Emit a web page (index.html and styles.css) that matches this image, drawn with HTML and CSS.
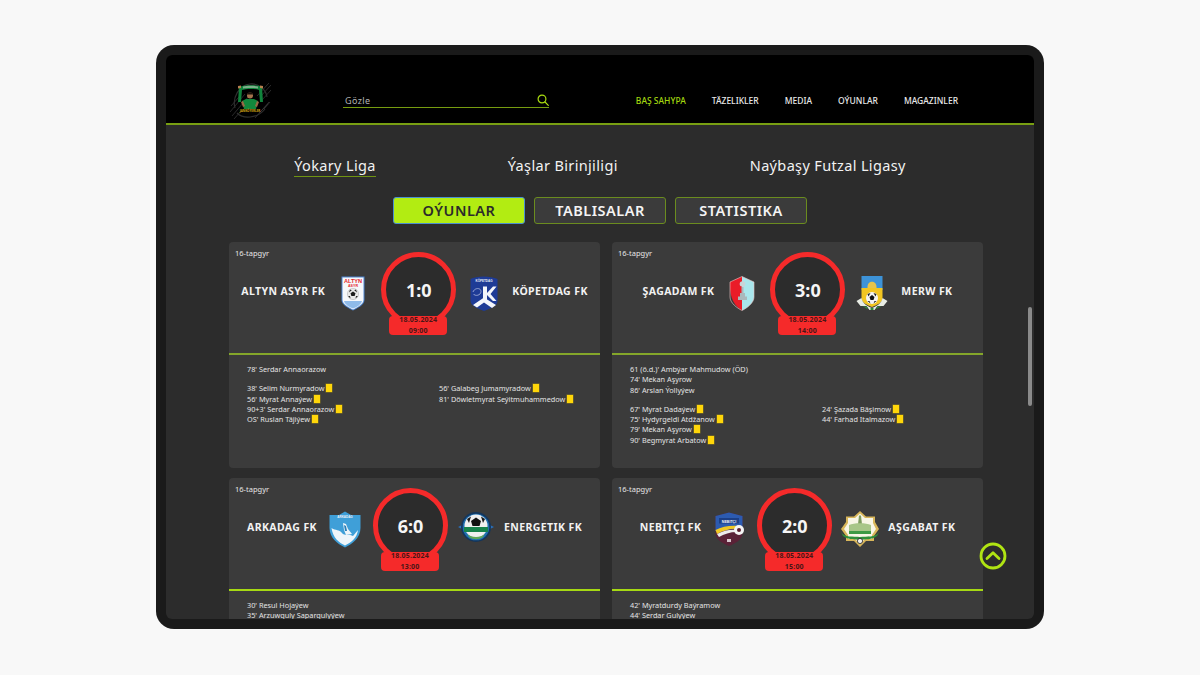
FILE: index.html
```html
<!DOCTYPE html>
<html lang="tk">
<head>
<meta charset="utf-8">
<title>Ýokary Liga</title>
<link rel="stylesheet" href="styles.css">
</head>
<body>
<div class="device">
<div class="screen">
  <header class="topbar">
    <svg class="brand" viewBox="0 0 42 38" aria-hidden="true">
      <g stroke="#3c3c3c" stroke-width=".7"><path d="M1 30L16 12M3 34L20 14M5 37L12 29M28 14L40 1M31 15L42 3M33 18L42 8M30 31L39 22M26 36L40 20M2 24L10 15M35 27L41 20"/></g>
      <path d="M6 26C3 16 10 3 21 2C30 1 37 8 38 15M8 31C14 37 28 37 36 27" fill="none" stroke="#2e2e2e" stroke-width="1.2"/>
      <path d="M10 5C16 2.500 27 2.500 33 5L34 20H31L30 8C26 6.500 17 6.500 13 8L12 20H9Z" fill="#10843c"/>
      <path d="M14 4.500C18 3.500 25 3.500 29 4.500V6.500C25 5.700 18 5.700 14 6.500Z" fill="#7cb08a"/>
      <path d="M9 4L12 3.500V6L9 6.500ZM31 3.500L34 4V6.500L31 6Z" fill="#b5804f"/>
      <path d="M13 19L17 17H25L29 19L27 27H15Z" fill="#12883c"/>
      <path d="M12 20L14 19L16 24L14 25ZM30 20L28 19L26 24L28 25Z" fill="#9a6a45"/>
      <circle cx="21" cy="13.500" r="3" fill="#a5744c"/>
      <path d="M18 12.500C18 9.500 24 9.500 24 12.500Z" fill="#1d120c"/>
      <text x="21" y="29.500" class="brand-text">JANKÖÝERLER</text>
    </svg>
    <form class="search">
      <span class="search-text">Gözle</span>
      <svg class="search-icon" viewBox="0 0 12 12" aria-hidden="true"><circle cx="5" cy="5" r="3.9"/><path d="M8 8L11.3 11.3"/></svg>
    </form>
    <nav class="nav">
      <a class="nav-link is-current">BAŞ SAHYPA</a>
      <a class="nav-link">TÄZELIKLER</a>
      <a class="nav-link">MEDIA</a>
      <a class="nav-link">OÝUNLAR</a>
      <a class="nav-link">MAGAZINLER</a>
    </nav>
  </header>

  <main class="content">
    <div class="leagues">
      <a class="league is-current">Ýokary Liga</a>
      <a class="league">Ýaşlar Birinjiligi</a>
      <a class="league">Naýbaşy Futzal Ligasy</a>
    </div>
    <div class="tabs">
      <button class="tab is-active">OÝUNLAR</button>
      <button class="tab">TABLISALAR</button>
      <button class="tab">STATISTIKA</button>
    </div>

    <div class="matches">
      <article class="match">
        <div class="match-head line-dim">
          <div class="round">16-tapgyr</div>
          <div class="teams">
            <span class="team">ALTYN ASYR FK</span>
            <svg class="logo" viewBox="0 0 30 40" aria-hidden="true">
              <path d="M3.500 6.500H26.500V30C26.500 35 19 38.500 15 40.500C11 38.500 3.500 35 3.500 30Z" fill="#4f86d2"/>
              <path d="M4.500 7.500H25.500V30C25.500 34 19 37.500 15 39.500C11 37.500 4.500 34 4.500 30Z" fill="#f6f8fb"/>
              <text x="15" y="12.500" class="crest crest-red">ALTYN</text>
              <text x="15" y="16.500" class="crest-sm crest-red">ASYR</text>
              <circle cx="15" cy="24" r="5.600" fill="#e9e9e9" stroke="#999" stroke-width=".4"/>
              <path d="M15 21.500L17.500 23.300L16.600 26H13.400L12.500 23.300Z" fill="#1c1c1c"/>
              <path d="M12 19.500L13.800 20.200L11 22.400ZM18 19.500L16.200 20.200L19 22.400ZM10 26L12 26L12.500 28.500ZM20 26L18 26L17.500 28.500Z" fill="#2a2a2a"/>
              <path d="M6 31H24C23 35 18 37.500 15 38.500C12 37.500 7 35 6 31Z" fill="#8fbbea"/>
            </svg>
            <div class="score-wrap">
              <div class="score">1:0</div>
              <div class="when"><span>18.05.2024</span><span>09:00</span></div>
            </div>
            <svg class="logo" viewBox="0 0 30 40" aria-hidden="true">
              <path d="M1.500 9C7 5.500 22 5.500 28.500 9V31C28.500 36 20 39 15 41C10 39 1.500 36 1.500 31Z" fill="#1e3b96"/>
              <text x="15" y="12" class="crest-xs crest-white">KÖPETDAG</text>
              <path d="M14 16.500H18V23L24 16.500H27.500L21.500 24L27.500 31H24L18 25V31H14Z" fill="#f4f6fb"/>
              <path d="M4 22C5.500 17.500 12 17.500 12 21.500C12 25.500 6 26.500 4.500 24" fill="none" stroke="#aeb9df" stroke-width=".8"/>
              <path d="M4 35L15 27.500L27 35L23 38L15 32.500L8 37.500Z" fill="#f4f6fb"/>
            </svg>
            <span class="team">KÖPETDAG FK</span>
          </div>
        </div>
        <div class="match-body">
          <ul class="events"><li>78' Serdar Annaorazow</li></ul>
          <div class="event-cols">
            <ul class="events">
              <li>38' Selim Nurmyradow <i class="yellow"></i></li>
              <li>56' Myrat Annaýew <i class="yellow"></i></li>
              <li>90+3' Serdar Annaorazow <i class="yellow"></i></li>
              <li>OS' Ruslan Täjiýew <i class="yellow"></i></li>
            </ul>
            <ul class="events">
              <li>56' Galabeg Jumamyradow <i class="yellow"></i></li>
              <li>81' Döwletmyrat Seýitmuhammedow <i class="yellow"></i></li>
            </ul>
          </div>
        </div>
      </article>

      <article class="match">
        <div class="match-head line-dim">
          <div class="round">16-tapgyr</div>
          <div class="teams">
            <span class="team">ŞAGADAM FK</span>
            <svg class="logo" viewBox="0 0 30 40" aria-hidden="true">
              <path d="M15 6.500L27 12V27C27 33 20 38 15 40.500Z" fill="#a9e6ec"/>
              <path d="M15 6.500L3 12C2.500 22 4 34 15 40.500Z" fill="#ea1c28"/>
              <path d="M15 6.500L27 12V27C27 33 20 38 15 40.500C10 38 3 33 3 27V12Z" fill="none" stroke="#f0c8c8" stroke-width=".6"/>
              <circle cx="15.500" cy="14" r="2.800" fill="#c9d4d8"/>
              <path d="M14.500 17h2v6h-2zM11 26.500h9v3.500h-9zM13 23h5v3.500h-5z" fill="#aab8bc"/>
            </svg>
            <div class="score-wrap">
              <div class="score">3:0</div>
              <div class="when"><span>18.05.2024</span><span>14:00</span></div>
            </div>
            <svg class="logo" viewBox="0 0 30 40" aria-hidden="true">
              <g transform="translate(-1.500 0)">
                <rect x="5" y="6" width="21" height="14" fill="#3d93d8"/>
                <path d="M11 17C11 10 20 10 20 17V19H11Z" fill="#e7c44a"/>
                <path d="M5 18H26V28C26 33 20 35 15.500 37C11 35 5 33 5 28Z" fill="#f2c521"/>
                <path d="M0 31L5 28C6 33 10 36 15.500 38C21 36 25 33 26 28L31 31L27 36L21 36L18 40H13L10 36L4 36Z" fill="#e8ece4"/>
                <path d="M6 36L11 37L11 39ZM14 38H17V40H14ZM20 37L25 36L20 39Z" fill="#2e8b3c"/>
                <circle cx="15.500" cy="28" r="6" fill="#f4f4f4"/>
                <path d="M15.500 25L18 27L17 30H14L13 27Z" fill="#111"/>
                <path d="M11 24L14 23L12 26.500ZM20 24L17 23L19 26.500ZM11 31L13 31L14 33.500ZM20 31L18 31L17 33.500Z" fill="#222"/>
              </g>
            </svg>
            <span class="team">MERW FK</span>
          </div>
        </div>
        <div class="match-body">
          <ul class="events">
            <li>61 (ö.d.)' Ambýar Mahmudow (ÖD)</li>
            <li>74' Mekan Aşyrow</li>
            <li>86' Arslan Ýollyýew</li>
          </ul>
          <div class="event-cols">
            <ul class="events">
              <li>67' Myrat Dadaýew <i class="yellow"></i></li>
              <li>75' Hydyrgeldi Atdžanow <i class="yellow"></i></li>
              <li>79' Mekan Aşyrow <i class="yellow"></i></li>
              <li>90' Begmyrat Arbatow <i class="yellow"></i></li>
            </ul>
            <ul class="events">
              <li>24' Şazada Bäşimow <i class="yellow"></i></li>
              <li>44' Farhad Italmazow <i class="yellow"></i></li>
            </ul>
          </div>
        </div>
      </article>

      <article class="match">
        <div class="match-head">
          <div class="round">16-tapgyr</div>
          <div class="teams">
            <span class="team">ARKADAG FK</span>
            <svg class="logo" viewBox="0 0 30 40" aria-hidden="true">
              <path d="M15 5.500L21 9H30.500V22C30.500 32 22 38 15 41.500C8 38 -.500 32 -.500 22V9H9Z" fill="#3f9fd8"/>
              <path d="M1.500 22C6 25 9 23 12 27C14 30 20 28 23 30L28 24C27 32 21 36.500 15 39.500C9 36.500 3 32 1.500 22Z" fill="#eef5fa"/>
              <path d="M13 17L16 18L18 23L22 28L16 29L14 24Z" fill="#eef5fa"/>
              <path d="M14 19L16 20L17 25L15 25Z" fill="#2d7fb6"/>
              <text x="15" y="12" class="crest-xs crest-white">ARKADAG</text>
            </svg>
            <div class="score-wrap">
              <div class="score">6:0</div>
              <div class="when"><span>18.05.2024</span><span>13:00</span></div>
            </div>
            <svg class="logo" viewBox="0 0 30 40" aria-hidden="true">
              <path d="M-3 21L4 17.500V24.500ZM33 21L26 17.500V24.500Z" fill="#2a6fb8"/>
              <circle cx="15" cy="21" r="15" fill="#14365c"/>
              <circle cx="15" cy="21" r="13.300" fill="#1f6fb0"/>
              <circle cx="15" cy="20" r="11.500" fill="#f0f0f0"/>
              <path d="M15 11.500L20 15L18.500 20H11.500L10 15Z" fill="#111"/>
              <path d="M6 13L10 10.500L8 17ZM24 13L20 10.500L22 17Z" fill="#1a1a1a"/>
              <rect x="3" y="21" width="24" height="5" fill="#17834c"/>
              <path d="M6.500 28C10 32 20 32 23.500 28L22 31C18 34 12 34 8 31Z" fill="#5fa85a"/>
            </svg>
            <span class="team">ENERGETIK FK</span>
          </div>
        </div>
        <div class="match-body">
          <ul class="events">
            <li>30' Resul Hojaýew</li>
            <li>35' Arzuwguly Sapargulyýew</li>
          </ul>
        </div>
      </article>

      <article class="match">
        <div class="match-head">
          <div class="round">16-tapgyr</div>
          <div class="teams">
            <span class="team">NEBITÇI FK</span>
            <svg class="logo" viewBox="0 0 30 40" aria-hidden="true">
              <path d="M1.500 10L15 6.500L28.500 10V27C28.500 34 20 38 15 40C10 38 1.500 34 1.500 27Z" fill="#5a2237"/>
              <path d="M1.500 10L15 6.500L28.500 10V22L1.500 25Z" fill="#2c5bb0"/>
              <rect x="5" y="12" width="20" height="5.500" fill="#1c3f86"/>
              <text x="15" y="16.500" class="crest-sm crest-white">NEBITÇI</text>
              <path d="M1.500 24C8 20 18 19 26 20L25 23C18 22 10 24 3 28Z" fill="#f0c823"/>
              <path d="M3 28C10 24 17 23 24 24L23 26C16 26 10 28 5 31Z" fill="#ececec"/>
              <circle cx="25" cy="24" r="5" fill="#f4f4f4"/>
              <circle cx="25" cy="24" r="2" fill="#5a1f2d"/>
              <path d="M13 33h4v3h-4z" fill="#d8c8ce"/>
            </svg>
            <div class="score-wrap">
              <div class="score">2:0</div>
              <div class="when"><span>18.05.2024</span><span>15:00</span></div>
            </div>
            <svg class="logo" viewBox="0 0 30 40" aria-hidden="true">
              <path d="M15 5L21 10.500H30V16L34 23L29 30V35H21L15 41L9 35H1V30L-4 23L1 16V10.500H9Z" fill="#d8b65a"/>
              <path d="M15 7.500L20 12H28V17L31 23L27 29V33H20L15 38L10 33H3V29L-1 23L3 17V12H10Z" fill="#f8f6e6"/>
              <path d="M14 9.500h2l1 9h-4z" fill="#7e9c5e"/>
              <path d="M4 19C9 16.500 21 16.500 26 19V25H4Z" fill="#a8c688"/>
              <path d="M-4 26C0 32 8 30 15 31C22 30 30 32 34 26L32 30C27 34 20 33 15 34C10 33 3 34 -2 30Z" fill="#2f8f3a"/>
              <rect x="4" y="25" width="22" height="3" fill="#3d9a44"/>
              <circle cx="15" cy="35" r="2.600" fill="#f2f2f2" stroke="#222" stroke-width=".8"/>
            </svg>
            <span class="team">AŞGABAT FK</span>
          </div>
        </div>
        <div class="match-body">
          <ul class="events">
            <li>42' Myratdurdy Baýramow</li>
            <li>44' Serdar Gulyýew</li>
          </ul>
        </div>
      </article>
    </div>

    <button class="to-top" aria-label="Ýokaryk">
      <svg viewBox="0 0 28 28" aria-hidden="true"><circle cx="14" cy="14" r="12"/><path d="M8 16.500L14 10.800L20 16.500"/></svg>
    </button>
    <div class="scroll-thumb"></div>
  </main>
</div>
</div>
</body>
</html>
```
FILE: styles.css
```css
* { box-sizing: border-box; }
html, body { margin: 0; height: 100%; }
body {
  background: #f8f8f8;
  font-family: "Noto Sans", "Open Sans", sans-serif;
  display: flex;
  align-items: center;
  justify-content: center;
  padding-bottom: 1px;
  overflow: hidden;
}
.device {
  width: 888px;
  height: 584px;
  padding: 10px;
  border-radius: 18px;
  background: #1a1a1a;
}
.screen {
  height: 564px;
  border-radius: 6px;
  overflow: hidden;
  display: flex;
  flex-direction: column;
  background: #2c2c2c;
}
.topbar {
  flex: none;
  height: 70px;
  padding: 20px 76px 2px 63px;
  display: flex;
  align-items: center;
  background: #000;
  border-bottom: 2px solid #789f12;
}
.brand { width: 42px; height: 38px; margin-top: 6px; flex: none; }
.brand-text { font: 700 3px "Noto Sans", sans-serif; text-anchor: middle; fill: #d5a514; }
.search {
  position: relative;
  width: 206px;
  height: 18px;
  margin: 2px 0 0 72px;
  display: flex;
  align-items: center;
  justify-content: space-between;
  padding: 3px 0 0 2px;
  border-bottom: 1px solid #769c10;
}
.search-text { font-size: 9px; letter-spacing: .4px; color: #b4b4b4; }
.search-icon { width: 12px; height: 12px; margin-bottom: 1px; fill: none; stroke: #a8dc10; stroke-width: 1.2; stroke-linecap: round; }
.nav { margin-left: auto; margin-top: 5px; display: flex; gap: 26px; }
.nav-link { font-size: 8.5px; font-weight: 500; line-height: 12px; color: #e8e8e8; }
.nav-link.is-current { color: #a2d60f; }

.content { position: relative; flex: 1; min-height: 0; overflow: hidden; }
.leagues {
  display: flex;
  justify-content: center;
  gap: 132px;
  padding-top: 30px;
}
.league {
  font-size: 14.5px;
  line-height: 20px;
  padding-bottom: 1px;
  letter-spacing: .35px;
  color: #f2f2f2;
  border-bottom: 1px solid transparent;
}
.league.is-current { border-bottom-color: #6f9312; }
.tabs {
  display: flex;
  justify-content: center;
  gap: 9px;
  margin-top: 20px;
}
.tab {
  width: 132px;
  height: 27px;
  padding: 0;
  border: 1px solid #6b8c1f;
  border-radius: 3px;
  background: #3b3b3b;
  color: #f4f4f4;
  font: 600 14.5px/1 "Noto Sans", sans-serif;
  letter-spacing: .5px;
}
.tab.is-active {
  background: #b2ec12;
  color: #2b2b2b;
  border-color: #4a8fd0;
}
.matches {
  display: grid;
  grid-template-columns: 371px 371px;
  grid-auto-rows: 226px;
  column-gap: 12px;
  row-gap: 10px;
  margin: 18px 0 0 63px;
}
.match {
  background: #3b3b3b;
  border-radius: 4px;
  display: flex;
  flex-direction: column;
}
.match-head {
  flex: none;
  height: 113px;
  padding: 6px 6px 0;
  border-bottom: 2px solid #a6d913;
}
.match-head.line-dim { border-bottom-color: #84a62a; }
.round { height: 10px; margin-bottom: -6px; font-size: 7.5px; line-height: 10px; color: #e6e6e6; }
.teams {
  display: flex;
  align-items: center;
  justify-content: center;
  gap: 13px;
  margin: 0 -6px;
}
.team {
  padding-top: 3px;
  font-size: 10.5px;
  font-weight: 700;
  letter-spacing: .4px;
  white-space: nowrap;
  color: #f2f2f2;
}
.logo { width: 30px; height: 40px; flex: none; overflow: visible; }
.crest { font: 700 5.6px "Liberation Sans", sans-serif; text-anchor: middle; }
.crest-sm { font: 700 3.6px "Liberation Sans", sans-serif; text-anchor: middle; }
.crest-xs { font: 700 3px "Liberation Sans", sans-serif; text-anchor: middle; }
.crest-red { fill: #e5262c; }
.crest-white { fill: #eef2fa; }
.score-wrap { position: relative; width: 75px; height: 75px; flex: none; }
.score {
  width: 75px;
  height: 75px;
  border: 5px solid #f52a2a;
  border-radius: 50%;
  background: #2c2c2c;
  display: flex;
  align-items: center;
  justify-content: center;
  font-size: 18px;
  font-weight: 700;
  color: #f6f6f6;
}
.when {
  position: absolute;
  left: 8px;
  top: 64px;
  width: 58px;
  height: 19px;
  border-radius: 4px;
  background: #f52a2a;
  display: flex;
  flex-direction: column;
  justify-content: center;
  align-items: center;
  font-size: 7px;
  font-weight: 700;
  line-height: 10.5px;
  letter-spacing: .2px;
  color: #4a1616;
}
.when span { flex: none; }
.match-body { padding: 9px 0 0 18px; font-size: 7.3px; line-height: 10.3px; color: #e4e4e4; }
.events { list-style: none; margin: 0; padding: 0; }
.event-cols { display: grid; grid-template-columns: 192px 1fr; margin-top: 9px; }
.events li { height: 10.3px; white-space: nowrap; }
.yellow {
  display: inline-block;
  width: 6px;
  height: 8px;
  vertical-align: -1px;
  background: #ffd60a;
  box-shadow: 0 0 0 .5px #8a7a1a;
}
.to-top {
  position: absolute;
  left: 813px;
  top: 417px;
  width: 28px;
  height: 28px;
  padding: 0;
  border: 0;
  background: none;
}
.to-top svg { display: block; width: 28px; height: 28px; fill: none; stroke: #b0e413; stroke-width: 2.8; stroke-linecap: round; stroke-linejoin: round; }
.scroll-thumb {
  position: absolute;
  left: 862px;
  top: 182px;
  width: 4px;
  height: 99px;
  border-radius: 2px;
  background: #8a8a8a;
}
```
